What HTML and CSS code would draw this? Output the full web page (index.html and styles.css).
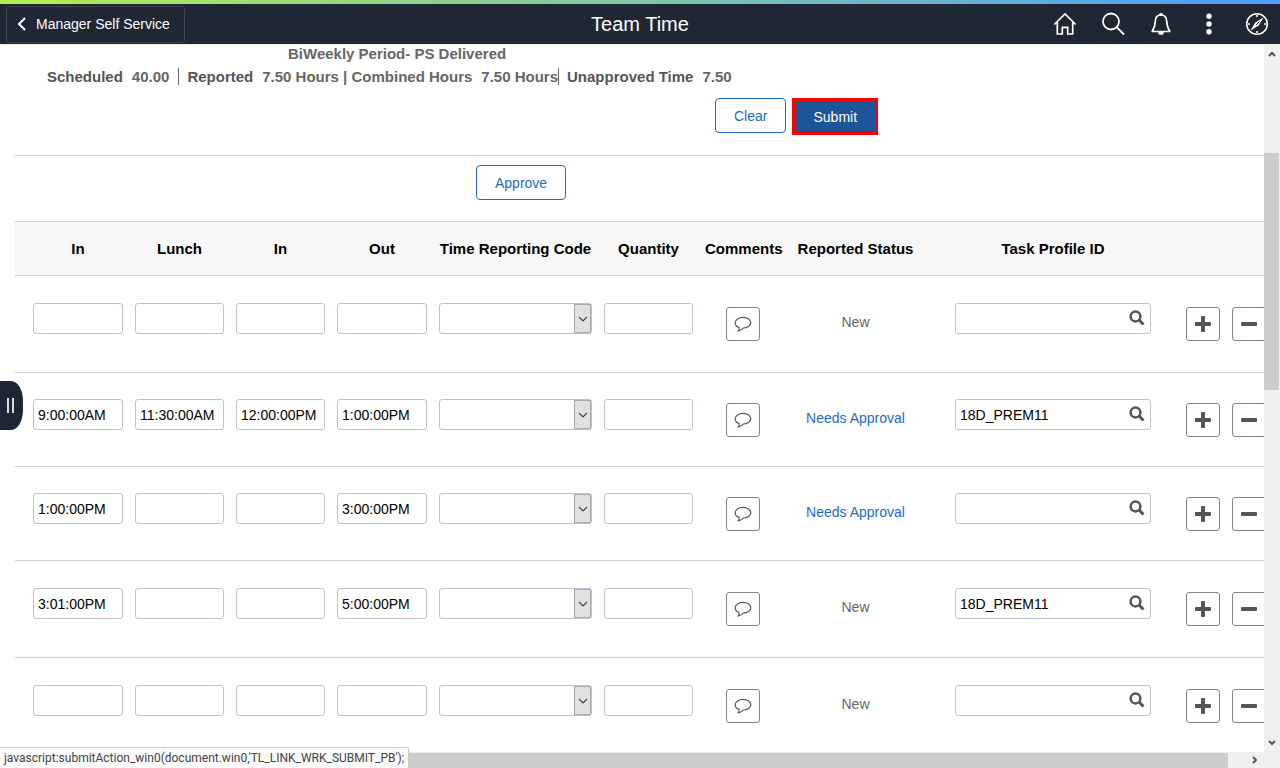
FILE: index.html
```html
<!DOCTYPE html>
<html lang="en">
<head>
<meta charset="utf-8">
<title>Team Time</title>
<link rel="stylesheet" href="styles.css">
</head>
<body>
<svg class="symbols" aria-hidden="true">
  <symbol id="comment" viewBox="0 0 18 16"><path d="M5 11.300C2.600 10.600 1.200 8.800 1.200 6.700 1.200 3.700 4.600 1.400 9 1.400s7.800 2.300 7.800 5.300S13.400 12 9.300 12C8.200 13.600 6.300 14.700 4.400 14.900 5.200 13.700 5.400 12.600 5 11.300z" fill="none" stroke="currentColor" stroke-width="1.200"/></symbol>
  <symbol id="lookup" viewBox="0 0 16 16"><circle cx="6.500" cy="6.500" r="4.900" fill="none" stroke="currentColor" stroke-width="2.500"/><path d="M10.300 10.300l4.200 4.200" stroke="currentColor" stroke-width="3"/></symbol>
  <symbol id="plus" viewBox="0 0 16 16"><path d="M1 6h5V1q0-1 1-1h2q1 0 1 1v5h5q1 0 1 1v2q0 1-1 1h-5v5q0 1-1 1H7q-1 0-1-1v-5H1q-1 0-1-1V7q0-1 1-1z" fill="currentColor"/></symbol>
  <symbol id="minus" viewBox="0 0 16 16"><rect y="6" width="16" height="4" rx="1" fill="currentColor"/></symbol>
  <symbol id="down" viewBox="0 0 10 6"><path d="M1 1l4 4 4-4" fill="none" stroke="currentColor" stroke-width="1.200"/></symbol>
  <symbol id="arrow" viewBox="0 0 8 6"><path d="M1 5l3-3 3 3" fill="none" stroke="currentColor" stroke-width="2"/></symbol>
</svg>
<div class="accent"></div>
<header class="banner">
  <button class="back" type="button"><svg width="10" height="16" viewBox="0 0 10 16"><path d="M8 2L2 8l6 6" fill="none" stroke="#fff" stroke-width="2"/></svg>Manager Self Service</button>
  <h1 class="title">Team Time</h1>
  <nav class="tools">
    <button type="button" aria-label="Home"><svg width="24" height="24" viewBox="0 0 24 24" fill="none" stroke="#fff" stroke-width="1.700"><path d="M1.300 12.500L12 2l10.700 10.500M4.300 10v12h5v-6.700h5.400V22h5V10"/></svg></button>
    <button type="button" aria-label="Search"><svg width="24" height="24" viewBox="0 0 24 24" fill="none" stroke="#fff" stroke-width="1.800"><circle cx="10" cy="9.500" r="8"/><path d="M15.700 15.200l7.300 7.300"/></svg></button>
    <button type="button" aria-label="Notifications"><svg width="24" height="24" viewBox="0 0 24 24" fill="none" stroke="#fff" stroke-width="1.700" stroke-linejoin="round"><path d="M12 3C8.200 3 6.600 5.600 6.400 8.500 6.200 13 5.500 16 3.200 19.500h17.600C18.500 16 17.800 13 17.600 8.500 17.400 5.600 15.800 3 12 3z"/><path d="M10 20a2 2 0 0 0 4 0zM10.800 3a1.200 1.200 0 0 1 2.400 0z" fill="#fff"/></svg></button>
    <button type="button" aria-label="Actions"><svg width="24" height="24" viewBox="0 0 24 24" fill="#fff"><circle cx="12" cy="4.300" r="2.700"/><circle cx="12" cy="12" r="2.700"/><circle cx="12" cy="19.800" r="2.700"/></svg></button>
    <button type="button" aria-label="NavBar"><svg width="24" height="24" viewBox="0 0 24 24" fill="none" stroke="#fff" stroke-width="1.600"><circle cx="12" cy="12" r="10.300"/><path d="M12 3v2M12 19v2M3 12h2M19 12h2" stroke-width="1.600"/><path d="M18.800 5.200l-5.200 8.400-8.400 5.200 5.200-8.400z" fill="#fff" stroke="none"/><path d="M11 13l3.500-3.500" stroke="#1e2733" stroke-width="1"/></svg></button>
  </nav>
</header>
<div class="viewport">
  <main class="page">
    <section class="summary">
      <p class="period">BiWeekly Period- PS Delivered</p>
      <div class="totals">
        <span class="label">Scheduled</span><span class="value">40.00</span>
        <span class="label ruled">Reported</span><span class="value">7.50 Hours | Combined Hours</span><span class="value">7.50 Hours</span>
        <span class="label ruled tight">Unapproved Time</span><span class="value">7.50</span>
      </div>
      <div class="actions"><button class="btn" type="button">Clear</button><button class="btn submit" type="button">Submit</button></div>
    </section>
    <div class="approve"><button class="btn" type="button">Approve</button></div>
    <table class="grid">
      <colgroup><col class="c-first"><col class="c-time"><col class="c-time"><col class="c-out"><col class="c-code"><col class="c-time"><col class="c-comment"><col class="c-status"><col class="c-task"><col></colgroup>
      <thead><tr><th class="first">In</th><th>Lunch</th><th>In</th><th>Out</th><th>Time Reporting Code</th><th>Quantity</th><th>Comments</th><th>Reported Status</th><th>Task Profile ID</th><th></th></tr></thead>
      <tbody>
        <tr class="new">
          <td class="first"><input class="field" aria-label="In"></td><td><input class="field" aria-label="Lunch"></td><td><input class="field" aria-label="In"></td><td><input class="field" aria-label="Out"></td>
          <td><div class="picker"><select class="field" aria-label="Time Reporting Code"><option></option></select><span class="chev"><svg width="10" height="6"><use href="#down"/></svg></span></div></td>
          <td><input class="field" aria-label="Quantity"></td><td><div class="icons"><button class="icon" type="button" aria-label="Comments"><svg width="18" height="16"><use href="#comment"/></svg></button></div></td>
          <td class="status">New</td>
          <td><div class="task"><input class="field" aria-label="Task Profile ID"><button class="lookup" type="button" aria-label="Look up"><svg width="16" height="16"><use href="#lookup"/></svg></button></div></td>
          <td class="last"><div class="icons rowops"><button class="icon" type="button" aria-label="Add row"><svg width="16" height="16"><use href="#plus"/></svg></button><button class="icon" type="button" aria-label="Delete row"><svg width="16" height="16"><use href="#minus"/></svg></button></div></td>
        </tr>
        <tr>
          <td class="first"><input class="field" aria-label="In" value="9:00:00AM"></td><td><input class="field" aria-label="Lunch" value="11:30:00AM"></td><td><input class="field" aria-label="In" value="12:00:00PM"></td><td><input class="field" aria-label="Out" value="1:00:00PM"></td>
          <td><div class="picker"><select class="field" aria-label="Time Reporting Code"><option></option></select><span class="chev"><svg width="10" height="6"><use href="#down"/></svg></span></div></td>
          <td><input class="field" aria-label="Quantity"></td><td><div class="icons"><button class="icon" type="button" aria-label="Comments"><svg width="18" height="16"><use href="#comment"/></svg></button></div></td>
          <td class="status"><a href="#">Needs Approval</a></td>
          <td><div class="task"><input class="field" aria-label="Task Profile ID" value="18D_PREM11"><button class="lookup" type="button" aria-label="Look up"><svg width="16" height="16"><use href="#lookup"/></svg></button></div></td>
          <td class="last"><div class="icons rowops"><button class="icon" type="button" aria-label="Add row"><svg width="16" height="16"><use href="#plus"/></svg></button><button class="icon" type="button" aria-label="Delete row"><svg width="16" height="16"><use href="#minus"/></svg></button></div></td>
        </tr>
        <tr>
          <td class="first"><input class="field" aria-label="In" value="1:00:00PM"></td><td><input class="field" aria-label="Lunch"></td><td><input class="field" aria-label="In"></td><td><input class="field" aria-label="Out" value="3:00:00PM"></td>
          <td><div class="picker"><select class="field" aria-label="Time Reporting Code"><option></option></select><span class="chev"><svg width="10" height="6"><use href="#down"/></svg></span></div></td>
          <td><input class="field" aria-label="Quantity"></td><td><div class="icons"><button class="icon" type="button" aria-label="Comments"><svg width="18" height="16"><use href="#comment"/></svg></button></div></td>
          <td class="status"><a href="#">Needs Approval</a></td>
          <td><div class="task"><input class="field" aria-label="Task Profile ID"><button class="lookup" type="button" aria-label="Look up"><svg width="16" height="16"><use href="#lookup"/></svg></button></div></td>
          <td class="last"><div class="icons rowops"><button class="icon" type="button" aria-label="Add row"><svg width="16" height="16"><use href="#plus"/></svg></button><button class="icon" type="button" aria-label="Delete row"><svg width="16" height="16"><use href="#minus"/></svg></button></div></td>
        </tr>
        <tr class="new">
          <td class="first"><input class="field" aria-label="In" value="3:01:00PM"></td><td><input class="field" aria-label="Lunch"></td><td><input class="field" aria-label="In"></td><td><input class="field" aria-label="Out" value="5:00:00PM"></td>
          <td><div class="picker"><select class="field" aria-label="Time Reporting Code"><option></option></select><span class="chev"><svg width="10" height="6"><use href="#down"/></svg></span></div></td>
          <td><input class="field" aria-label="Quantity"></td><td><div class="icons"><button class="icon" type="button" aria-label="Comments"><svg width="18" height="16"><use href="#comment"/></svg></button></div></td>
          <td class="status">New</td>
          <td><div class="task"><input class="field" aria-label="Task Profile ID" value="18D_PREM11"><button class="lookup" type="button" aria-label="Look up"><svg width="16" height="16"><use href="#lookup"/></svg></button></div></td>
          <td class="last"><div class="icons rowops"><button class="icon" type="button" aria-label="Add row"><svg width="16" height="16"><use href="#plus"/></svg></button><button class="icon" type="button" aria-label="Delete row"><svg width="16" height="16"><use href="#minus"/></svg></button></div></td>
        </tr>
        <tr class="new">
          <td class="first"><input class="field" aria-label="In"></td><td><input class="field" aria-label="Lunch"></td><td><input class="field" aria-label="In"></td><td><input class="field" aria-label="Out"></td>
          <td><div class="picker"><select class="field" aria-label="Time Reporting Code"><option></option></select><span class="chev"><svg width="10" height="6"><use href="#down"/></svg></span></div></td>
          <td><input class="field" aria-label="Quantity"></td><td><div class="icons"><button class="icon" type="button" aria-label="Comments"><svg width="18" height="16"><use href="#comment"/></svg></button></div></td>
          <td class="status">New</td>
          <td><div class="task"><input class="field" aria-label="Task Profile ID"><button class="lookup" type="button" aria-label="Look up"><svg width="16" height="16"><use href="#lookup"/></svg></button></div></td>
          <td class="last"><div class="icons rowops"><button class="icon" type="button" aria-label="Add row"><svg width="16" height="16"><use href="#plus"/></svg></button><button class="icon" type="button" aria-label="Delete row"><svg width="16" height="16"><use href="#minus"/></svg></button></div></td>
        </tr>
      </tbody>
    </table>
  </main>
  <div class="vbar" aria-hidden="true"><svg class="arrow" width="8" height="6"><use href="#arrow"/></svg><div class="vtrack"><div class="vthumb"></div></div><svg class="arrow flip" width="8" height="6"><use href="#arrow"/></svg></div>
  <div class="hbar" aria-hidden="true"><div class="hthumb"></div><svg class="arrow turn" width="8" height="6"><use href="#arrow"/></svg></div>
  <button class="handle" type="button" aria-label="Expand panel"><i></i><i></i></button>
  <div class="linkinfo">javascript:submitAction_win0(document.win0,'TL_LINK_WRK_SUBMIT_PB');</div>
</div>
</body>
</html>
```
FILE: styles.css
```css
* { box-sizing: border-box; }
body { margin: 0; height: 100vh; display: flex; flex-direction: column; overflow: hidden; background: #fff; color: #000; font-family: "Liberation Sans", Arial, sans-serif; font-size: 15px; }
button, input, select { font: inherit; }
button { padding: 0; border: 0; background: none; }
svg { display: block; flex: none; }
.symbols { position: absolute; width: 0; height: 0; }
.accent { flex: none; height: 4px; background: linear-gradient(90deg, #b4ed50, #4a9eff); }

.banner { flex: none; height: 40px; display: grid; grid-template-columns: 1fr auto 1fr; align-items: center; padding: 0 6px; background: #1e2733; color: #fff; }
.back { justify-self: start; display: flex; align-items: center; gap: 9px; height: 37px; padding: 0 14px 0 10px; border: 1px solid #3c4653; border-radius: 3px; color: #fff; font-size: 14px; }
.title { margin: 0; font-size: 20px; font-weight: 400; }
.tools { justify-self: end; display: flex; gap: 24px; padding-right: 5px; }

.viewport { position: relative; flex: 1; min-height: 0; display: grid; grid-template: minmax(0, 1fr) 16px / minmax(0, 1fr) 16px; border-top: 1px solid #eee; }
.page { overflow: hidden; padding-left: 15px; }
.summary { padding-bottom: 20px; border-bottom: 1px solid #d0d0d0; color: #666; font-weight: 700; }
.period { margin: 0; padding-left: 273px; line-height: 18px; }
.totals { display: flex; align-items: center; gap: 9px; height: 27px; padding-left: 32px; white-space: nowrap; }
.label { color: #555; }
.ruled { padding-left: 8px; border-left: 1px solid #666; }
.tight { margin-left: -9px; }
.actions { display: flex; align-items: start; gap: 6px; margin-top: 8px; padding-left: 700px; }
.btn { height: 35px; padding: 0 18px; border: 1px solid #1f6ac6; border-radius: 4px; background: #fff; color: #1f6ac6; font-size: 14px; font-weight: 400; }
.submit { height: 37px; padding: 0 18px; border: 3px solid #f00; border-radius: 0; background: #1c5699; color: #fff; }
.approve { display: flex; padding: 9px 0 21px 461px; }

.grid { width: 100%; min-width: 1266px; table-layout: fixed; border-collapse: separate; border-spacing: 0; }
.c-first { width: 114px; }
.c-time { width: 101px; }
.c-out { width: 102px; }
.c-code { width: 165px; }
.c-comment { width: 87px; }
.c-status { width: 139px; }
.c-task { width: 256px; }
th { height: 55px; padding: 0 6px; border-top: 1px solid #d0d0d0; border-bottom: 1px solid #d0d0d0; background: #f7f7f7; white-space: nowrap; }
td { height: 94px; padding: 26px 6px 0; border-bottom: 1px solid #c9d1da; vertical-align: top; }
.new td { height: 97px; padding-top: 27px; }
th.first, td.first { padding-left: 18px; }
td.last { padding-left: 5px; }
.field { display: block; width: 100%; height: 31px; margin: 0; padding: 0 4px; border: 1px solid #bbc4cf; border-radius: 3px; background: #fff; color: #000; font-size: 14px; appearance: none; }
.picker, .task { position: relative; }
.task { width: 196px; margin: 0 auto; }
.chev { position: absolute; top: 1px; right: 1px; bottom: 1px; width: 17px; display: flex; align-items: center; justify-content: center; border: 1px solid #aaa; background: #e1e1e1; color: #444; pointer-events: none; }
.lookup { position: absolute; top: 7px; right: 6px; color: #555; }
.icons { display: flex; justify-content: center; gap: 12px; padding-top: 4px; }
.rowops { justify-content: start; }
.icon { display: flex; align-items: center; justify-content: center; flex: none; width: 34px; height: 34px; border: 1px solid #7d8590; border-radius: 3px; background: #fff; color: #555; }
.status { color: #666; font-size: 14px; line-height: 38px; text-align: center; }
.status a { color: #1f6ac6; text-decoration: none; }

.vbar { display: flex; flex-direction: column; align-items: center; padding: 6px 0; background: #f0f0f0; color: #555; }
.vtrack { flex: 1; align-self: stretch; display: grid; grid-template-rows: 96fr 237fr 351fr; padding-right: 1px; }
.vthumb { grid-row: 2; background: #cdcdcd; }
.hbar { grid-column: 1 / -1; display: flex; align-items: center; gap: 23px; padding-right: 21px; background: #f0f0f0; color: #555; }
.hthumb { flex: 1; height: 15px; background: #cdcdcd; }
.flip { transform: rotate(180deg); }
.turn { transform: rotate(90deg); }
.handle { position: absolute; top: 336px; left: 0; display: flex; align-items: center; justify-content: center; gap: 3px; width: 23px; height: 49px; padding-right: 2px; border-radius: 0 12px 12px 0 / 0 20px 20px 0; background: #1e2733; }
.handle i { width: 2px; height: 15px; background: #ddd; }
.linkinfo { position: absolute; left: 0; bottom: 0; height: 21px; padding: 0 4px; border: solid #ccc; border-width: 1px 1px 0 0; border-radius: 0 2px 0 0; background: #fafafa; color: #444; font: 12px/21px Roboto, "Open Sans", sans-serif; white-space: nowrap; }
```
